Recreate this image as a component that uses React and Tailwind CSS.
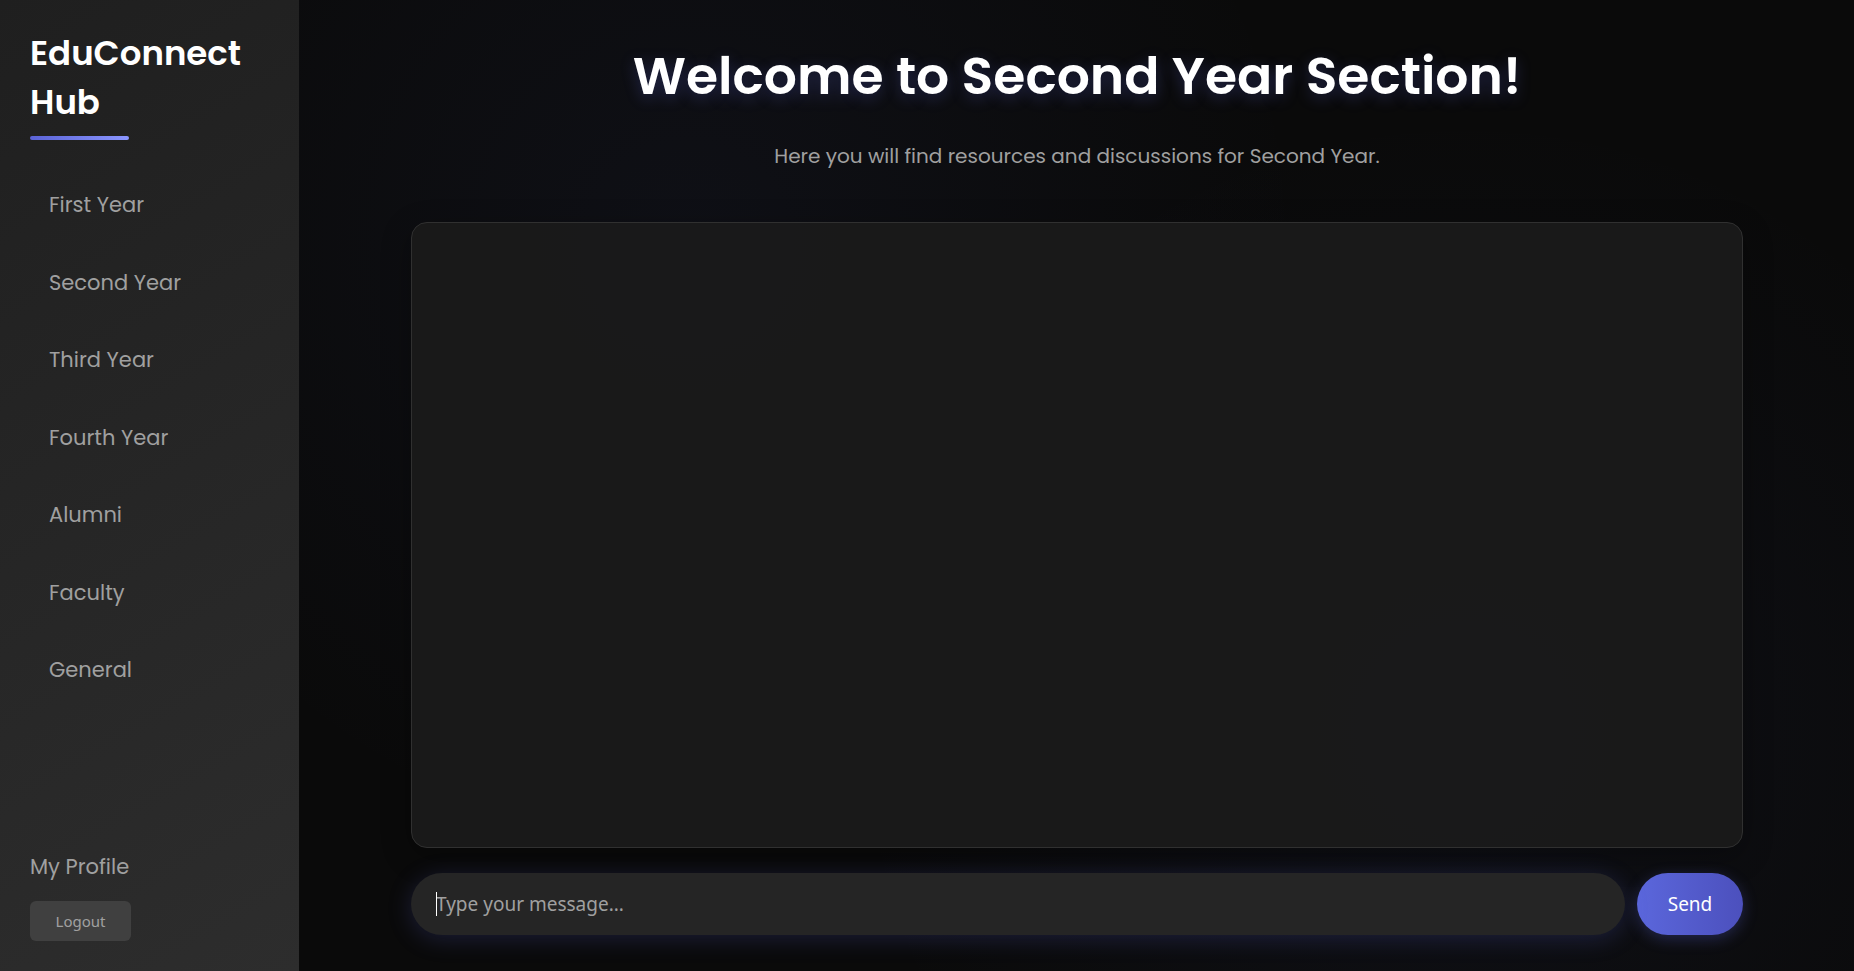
const sections = ["First Year", "Second Year", "Third Year", "Fourth Year", "Alumni", "Faculty", "General"];

export default function App() {
  return (
    <div className="flex min-h-screen bg-[#0a0a0a] font-[Poppins,Inter,sans-serif] text-[#a0a0a0]">
      <aside className="flex w-[299px] shrink-0 flex-col items-start bg-linear-150 from-[#1f1f1f] to-[#2d2d2d] px-[30px] pt-[29px] pb-[30px]">
        <h2 className="text-[34px] leading-[49px] font-semibold text-white">EduConnect Hub</h2>
        <div className="mt-[9px] h-1 w-[99px] rounded-[2px] bg-linear-to-r from-[#5b63d6] to-[#8b96ff]" />
        <nav className="mt-9 flex h-[523px] w-full flex-col justify-between text-[21px] leading-[30px]">
          {sections.map((name) => (
            <a key={name} href="#" className="block px-[19px] py-[14px]">{name}</a>
          ))}
        </nav>
        <div className="mt-auto flex flex-col items-start gap-[19px] text-[21px] leading-[30px]">
          <a href="#">My Profile</a>
          <button type="button" className="h-10 w-[101px] rounded-md bg-[#404040] font-['Noto_Sans',sans-serif] text-[15px]">Logout</button>
        </div>
      </aside>
      <main className="flex min-w-0 flex-1 flex-col bg-[radial-gradient(circle_at_25%_25%,rgba(91,110,214,0.06),transparent_45%),radial-gradient(circle_at_75%_75%,rgba(91,110,214,0.06),transparent_45%)] pt-10 pr-[111px] pb-9 pl-28">
        <h1 className="text-center text-[52px] leading-[72px] font-semibold text-white [text-shadow:0_4px_15px_rgba(91,99,214,0.3)]">Welcome to Second Year Section!</h1>
        <p className="mt-[29px] text-center text-[20px] leading-[30px]">Here you will find resources and discussions for Second Year.</p>
        <div className="mt-[51px] flex-1 rounded-2xl border border-[#303030] bg-[#1b1b1b]/90 shadow-[0_8px_30px_rgba(0,0,0,0.3)]" />
        <form className="mt-[25px] flex gap-3 font-['Noto_Sans',sans-serif] text-[19px]" onSubmit={(e) => e.preventDefault()}>
          <div className="relative min-w-0 flex-1">
            <input type="text" aria-label="Message" placeholder="Type your message..." className="h-[62px] w-full rounded-[31px] bg-[#252525] px-[25px] text-white shadow-[0_4px_25px_rgba(91,99,214,0.22)] outline-none placeholder:text-[#a0a0a0]" />
            <span className="absolute top-[19px] left-[25px] h-6 w-px bg-white" />
          </div>
          <button type="submit" className="h-[62px] w-[106px] rounded-[31px] bg-linear-to-r from-[#5b67dc] to-[#4c50bd] text-white shadow-[0_4px_15px_rgba(91,99,214,0.3)]">Send</button>
        </form>
      </main>
    </div>
  );
}
